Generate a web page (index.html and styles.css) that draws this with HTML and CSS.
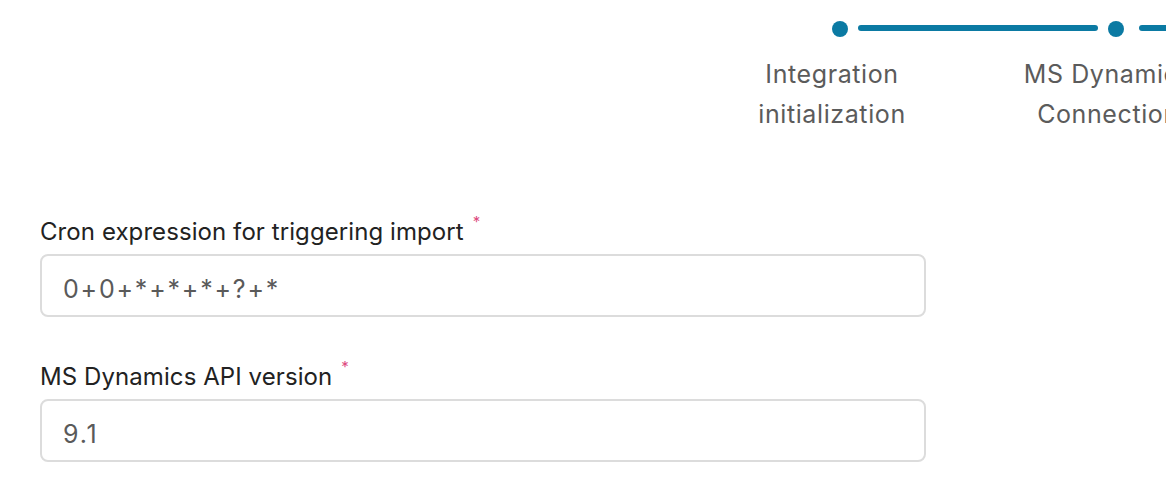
FILE: index.html
```html
<!DOCTYPE html>
<html lang="en">
<head>
<meta charset="utf-8">
<title>Integration setup</title>
<link rel="stylesheet" href="styles.css">
</head>
<body>
<div class="page">
  <div class="stepper">
    <div class="step">
      <div class="step-head">
        <span class="dot"></span>
        <span class="connector"></span>
      </div>
      <div class="step-label">Integration<br>initialization</div>
    </div>
    <div class="step">
      <div class="step-head">
        <span class="dot"></span>
        <span class="connector connector-next"></span>
      </div>
      <div class="step-label">MS Dynamics<br>Connection</div>
    </div>
  </div>

  <form class="form">
    <div class="field">
      <label class="field-label" for="cron">Cron expression for triggering import<span class="req">*</span></label>
      <input class="field-input" id="cron" type="text" value="0+0+*+*+*+?+*">
    </div>
    <div class="field">
      <label class="field-label" for="api">MS Dynamics API version<span class="req">*</span></label>
      <input class="field-input" id="api" type="text" value="9.1">
    </div>
  </form>
</div>
</body>
</html>
```

FILE: styles.css
```css
* { box-sizing: border-box; }

html, body {
  margin: 0;
  padding: 0;
  background: #ffffff;
  overflow: hidden;
}

body {
  font-family: Inter, "Noto Sans", "Liberation Sans", sans-serif;
  width: 1166px;
  height: 494px;
}

.page {
  width: 1166px;
  overflow: hidden;
}

.stepper {
  display: flex;
  padding-top: 21px;
  padding-left: 694px;
  width: 1400px;
}

.step {
  width: 276px;
  flex: 0 0 276px;
  display: flex;
  flex-direction: column;
  align-items: stretch;
}

.step-head {
  display: flex;
  align-items: center;
  height: 16px;
  padding-left: 138px;
}

.dot {
  width: 16px;
  height: 16px;
  flex: 0 0 16px;
  border-radius: 50%;
  background: #0b7aa3;
}

.connector {
  height: 6px;
  width: 240px;
  flex: 0 0 240px;
  margin-left: 10px;
  border-radius: 3px;
  background: #0b7aa3;
  position: relative;
  top: -1px;
}

.connector-next {
  margin-left: 15px;
}

.step-label {
  margin-top: 17px;
  text-align: center;
  font-size: 25px;
  letter-spacing: 0.6px;
  line-height: 40px;
  color: #5b5b5b;
  white-space: nowrap;
}

.form {
  padding-left: 40px;
  padding-top: 80px;
  display: flex;
  flex-direction: column;
  gap: 42px;
}

.field {
  display: flex;
  flex-direction: column;
  gap: 4px;
  width: 886px;
}

.field-label {
  font-size: 24px;
  letter-spacing: 0.08px;
  line-height: 36px;
  color: #222222;
}

.req {
  color: #dd4b80;
  font-size: 15px;
  vertical-align: top;
  line-height: 20px;
  margin-left: 9px;
  position: relative;
  top: -2px;
}

.field-input {
  display: block;
  width: 886px;
  height: 63px;
  border: 2px solid #dcdcdc;
  border-radius: 8px;
  padding: 9px 21px 3px;
  font-family: Inter, "Noto Sans", "Liberation Sans", sans-serif;
  font-size: 25px;
  letter-spacing: 1.8px;
  color: #5a5a5a;
  background: #ffffff;
  outline: none;
}
```
